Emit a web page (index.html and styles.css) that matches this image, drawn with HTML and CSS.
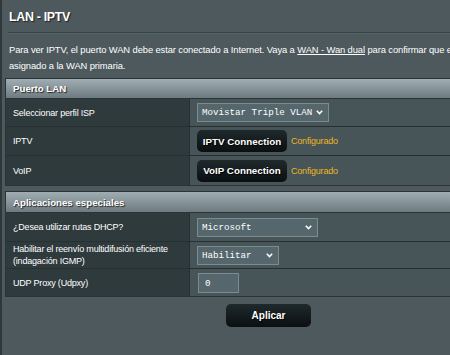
FILE: index.html
```html
<!DOCTYPE html>
<html>
<head>
    <title>LAN - IPTV</title>
    <link rel="stylesheet" href="styles.css">
</head>
<body>
    <div class="page">
        <div class="content">
            <h2 class="title">LAN - IPTV</h2>
            <div class="divider"></div>
            <p class="desc">Para ver IPTV, el puerto WAN debe estar conectado a Internet. Vaya a <a href="#">WAN - Wan dual</a> para confirmar que el puerto WAN está<br>asignado a la WAN primaria.</p>

            <table class="form-table">
                <thead>
                    <tr><th colspan="2">Puerto LAN</th></tr>
                </thead>
                <tbody>
                    <tr class="row-28">
                        <th>Seleccionar perfil ISP</th>
                        <td>
                            <div class="select select-isp">
                                <span>Movistar Triple VLAN</span>
                                <svg width="7" height="5" viewBox="0 0 7 5"><path d="M0.8 0.8 L3.5 3.6 L6.2 0.8" fill="none" stroke="#fff" stroke-width="1.5"/></svg>
                            </div>
                        </td>
                    </tr>
                    <tr class="row-29">
                        <th>IPTV</th>
                        <td><button type="button" class="conn-btn">IPTV Connection</button><span class="status">Configurado</span></td>
                    </tr>
                    <tr class="row-29">
                        <th>VoIP</th>
                        <td><button type="button" class="conn-btn">VoIP Connection</button><span class="status">Configurado</span></td>
                    </tr>
                </tbody>
            </table>

            <table class="form-table second">
                <thead>
                    <tr><th colspan="2">Aplicaciones especiales</th></tr>
                </thead>
                <tbody>
                    <tr class="row-29">
                        <th>¿Desea utilizar rutas DHCP?</th>
                        <td>
                            <div class="select select-dhcp">
                                <span>Microsoft</span>
                                <svg width="7" height="5" viewBox="0 0 7 5"><path d="M0.8 0.8 L3.5 3.6 L6.2 0.8" fill="none" stroke="#fff" stroke-width="1.5"/></svg>
                            </div>
                        </td>
                    </tr>
                    <tr class="row-27">
                        <th>Habilitar el reenvío multidifusión eficiente<br>(indagación IGMP)</th>
                        <td>
                            <div class="select select-igmp">
                                <span>Habilitar</span>
                                <svg width="7" height="5" viewBox="0 0 7 5"><path d="M0.8 0.8 L3.5 3.6 L6.2 0.8" fill="none" stroke="#fff" stroke-width="1.5"/></svg>
                            </div>
                        </td>
                    </tr>
                    <tr class="row-27">
                        <th>UDP Proxy (Udpxy)</th>
                        <td><input type="text" class="text-input" value="0"></td>
                    </tr>
                </tbody>
            </table>

            <div class="apply-bar">
                <button type="button" class="apply-btn">Aplicar</button>
            </div>
        </div>
    </div>
</body>
</html>
```

FILE: styles.css
```css
body {
    margin: 0;
    background-color: #4d595d;
    color: #fff;
    font-family: "Liberation Sans", Arial, sans-serif;
    overflow: hidden;
}
.page {
    border-left: 2px solid #2e373a;
    min-height: 355px;
    padding-left: 3px;
}
.content {
    width: 527px;
}
.title {
    margin: 0;
    padding: 9px 0 0 4px;
    height: 23px;
    font-size: 12.4px;
    font-weight: bold;
    letter-spacing: -0.3px;
    line-height: 16px;
    text-shadow: 1px 1px 1px #1c2224;
}
.divider {
    height: 1px;
    background: #384346;
    border-bottom: 1px solid #55636a;
    margin-left: 3px;
}
.desc {
    margin: 0;
    padding: 8px 0 0 4px;
    height: 36px;
    font-size: 9.4px;
    letter-spacing: -0.1px;
    line-height: 16px;
    white-space: nowrap;
}
.desc a {
    color: #fff;
    text-decoration: underline;
}
.form-table {
    width: 100%;
    border-collapse: separate;
    border-spacing: 0;
    border: 1px solid #2a3336;
    background: #475458;
}
.form-table.second {
    margin-top: 5px;
}
.form-table thead th {
    height: 20px;
    box-sizing: border-box;
    padding: 0 0 0 7px;
    text-align: left;
    font-size: 9.7px;
    font-weight: bold;
    background: linear-gradient(#a0aeb3, #6d7b80);
    border-bottom: 1px solid #2a3336;
    text-shadow: 1px 1px 1px #222;
}
.form-table.second thead th {
    height: 21px;
}
.form-table tbody th,
.form-table td {
    border-bottom: 1px solid #263033;
}
.form-table tbody tr:last-child th,
.form-table tbody tr:last-child td {
    border-bottom: none;
}
.form-table tbody th {
    width: 176px;
    padding: 0 0 0 7px;
    text-align: left;
    font-size: 9px;
    letter-spacing: -0.2px;
    font-weight: normal;
    line-height: 12px;
    background: #2f3a3d;
    border-right: 1px solid #263033;
}
.form-table td {
    padding: 0 0 0 7px;
}
.row-27 { height: 27px; }
.row-28 { height: 28px; }
.row-29 { height: 29px; }
.select {
    display: flex;
    align-items: center;
    justify-content: space-between;
    box-sizing: border-box;
    height: 19px;
    padding: 0 5px 0 4px;
    background: #55676c;
    border: 1px solid #7b8b8f;
    font-family: "Liberation Mono", monospace;
    font-size: 9.2px;
}
.select-isp { width: 132px; }
.select-dhcp { width: 121px; }
.select-igmp { width: 82px; }
.text-input {
    box-sizing: border-box;
    width: 41px;
    height: 20px;
    margin-left: 1px;
    padding: 0 6px;
    background: #55676c;
    border: 1px solid #7b8b8f;
    color: #fff;
    font-family: "Liberation Mono", monospace;
    font-size: 9.2px;
}
.conn-btn,
.apply-btn {
    border: none;
    border-radius: 5px;
    color: #fff;
    font-family: "Liberation Sans", Arial, sans-serif;
    font-weight: bold;
    background: linear-gradient(#1f292c, #0b0f11);
    text-shadow: 1px 1px 1px #000;
    cursor: pointer;
}
.conn-btn {
    width: 90px;
    height: 22px;
    padding: 0;
    font-size: 9.8px;
    vertical-align: middle;
}
.status {
    margin-left: 4px;
    color: #ecb61d;
    font-size: 9px;
    letter-spacing: -0.2px;
    vertical-align: middle;
}
.apply-bar {
    display: flex;
    justify-content: center;
    padding-top: 7px;
}
.apply-btn {
    width: 85px;
    height: 23px;
    font-size: 10px;
}
```
